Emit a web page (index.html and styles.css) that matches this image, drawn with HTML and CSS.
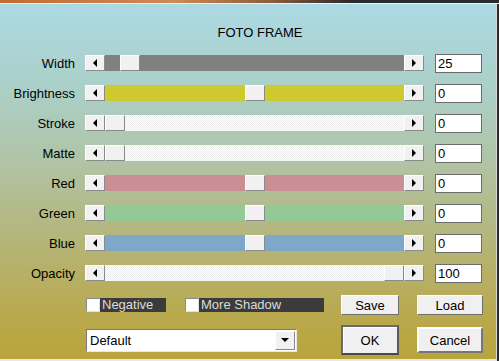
FILE: index.html
```html
<!DOCTYPE html>
<html lang="en">
<head>
  <meta charset="UTF-8">
  <title>Foto Frame</title>
  <link rel="stylesheet" href="styles.css">
</head>
<body>
  <div class="topstrip"></div>
  <div class="dialog">
    <div class="title">FOTO FRAME</div>

    <div class="rows">
      <div class="row">
        <span class="name">Width</span>
        <div class="scroll">
          <span class="arrow"><i class="tri left"></i></span>
          <div class="track gray"><span class="thumb" style="margin-left:15px"></span></div>
          <span class="arrow"><i class="tri right"></i></span>
        </div>
        <input class="num" type="text" value="25">
      </div>
      <div class="row">
        <span class="name">Brightness</span>
        <div class="scroll">
          <span class="arrow"><i class="tri left"></i></span>
          <div class="track yellow"><span class="thumb" style="margin-left:140px"></span></div>
          <span class="arrow"><i class="tri right"></i></span>
        </div>
        <input class="num" type="text" value="0">
      </div>
      <div class="row">
        <span class="name">Stroke</span>
        <div class="scroll">
          <span class="arrow"><i class="tri left"></i></span>
          <div class="track white"><span class="thumb" style="margin-left:0px"></span></div>
          <span class="arrow"><i class="tri right"></i></span>
        </div>
        <input class="num" type="text" value="0">
      </div>
      <div class="row">
        <span class="name">Matte</span>
        <div class="scroll">
          <span class="arrow"><i class="tri left"></i></span>
          <div class="track white"><span class="thumb" style="margin-left:0px"></span></div>
          <span class="arrow"><i class="tri right"></i></span>
        </div>
        <input class="num" type="text" value="0">
      </div>
      <div class="row">
        <span class="name">Red</span>
        <div class="scroll">
          <span class="arrow"><i class="tri left"></i></span>
          <div class="track red"><span class="thumb" style="margin-left:140px"></span></div>
          <span class="arrow"><i class="tri right"></i></span>
        </div>
        <input class="num" type="text" value="0">
      </div>
      <div class="row">
        <span class="name">Green</span>
        <div class="scroll">
          <span class="arrow"><i class="tri left"></i></span>
          <div class="track green"><span class="thumb" style="margin-left:140px"></span></div>
          <span class="arrow"><i class="tri right"></i></span>
        </div>
        <input class="num" type="text" value="0">
      </div>
      <div class="row">
        <span class="name">Blue</span>
        <div class="scroll">
          <span class="arrow"><i class="tri left"></i></span>
          <div class="track blue"><span class="thumb" style="margin-left:140px"></span></div>
          <span class="arrow"><i class="tri right"></i></span>
        </div>
        <input class="num" type="text" value="0">
      </div>
      <div class="row">
        <span class="name">Opacity</span>
        <div class="scroll">
          <span class="arrow"><i class="tri left"></i></span>
          <div class="track white"><span class="thumb" style="margin-left:279px"></span></div>
          <span class="arrow"><i class="tri right"></i></span>
        </div>
        <input class="num" type="text" value="100">
      </div>
    </div>

    <div class="bottom">
      <div class="opts">
        <label class="check"><span class="box"></span><span class="cap cap-neg">Negative</span></label>
        <label class="check"><span class="box"></span><span class="cap cap-shadow">More Shadow</span></label>
      </div>
      <button class="btn small">Save</button>
      <button class="btn small">Load</button>

      <div class="select">
        <span class="select-text">Default</span>
        <span class="drop"><i class="tri down"></i></span>
      </div>
      <button class="btn ok">OK</button>
      <button class="btn cancel">Cancel</button>
    </div>
  </div>
</body>
</html>
```

FILE: styles.css
```css
body {
  margin: 0;
  background-color: #2b2b2b;
  font-family: "Liberation Sans", Arial, sans-serif;
  font-size: 13px;
  color: #000;
  width: 499px;
  height: 361px;
  overflow: hidden;
}
.topstrip {
  height: 3px;
  background: linear-gradient(to right, #c46a35, #d08a55 35%, #8a5a3a 55%, #2b2b2b 70%);
  border-bottom: 1px solid #f2f2f2;
}
.dialog {
  width: 496px;
  height: 355px;
  border-right: 1px solid #d6d6d6;
  border-bottom: 2px solid #e8e8e8;
  background: linear-gradient(#abd9e4, #abcfc6 25%, #b0c3a4 45%, #b4b67c 65%, #b9a84a 90%, #b9a43c);
}
.title {
  padding-top: 22px;
  height: 14px;
  line-height: 14px;
  font-size: 13px;
  text-align: center;
  padding-left: 24px;
}
.rows {
  margin-top: 8px;
}
.row {
  display: flex;
  align-items: center;
  height: 30px;
}
.name {
  width: 75px;
  text-align: right;
  margin-right: 10px;
}
.scroll {
  display: flex;
  width: 339px;
  height: 16px;
  margin-right: 11px;
}
.arrow,
.thumb,
.drop {
  box-sizing: border-box;
  display: flex;
  align-items: center;
  justify-content: center;
  background-color: #f1f1f1;
  border: 1px solid;
  border-color: #ffffff #8a8a8a #8a8a8a #ffffff;
}
.arrow {
  width: 20px;
  height: 16px;
}
.thumb {
  display: block;
  width: 20px;
  height: 16px;
}
.track {
  flex: 1;
  display: flex;
}
.gray { background-color: #808080; }
.yellow { background-color: #cdc92f; }
.red { background-color: #c98f94; }
.green { background-color: #94c895; }
.blue { background-color: #7fa7c9; }
.white {
  background: repeating-conic-gradient(#ffffff 0 25%, #ececec 0 50%) 0 0 / 2px 2px;
}
.tri {
  width: 0;
  height: 0;
  border: 4px solid transparent;
}
.tri.left {
  border-right: 4px solid #000;
  border-left-width: 0;
}
.tri.right {
  border-left: 4px solid #000;
  border-right-width: 0;
}
.tri.down {
  border-top: 4px solid #000;
  border-bottom-width: 0;
}
.num {
  box-sizing: border-box;
  width: 47px;
  height: 19px;
  padding: 0 2px;
  border: 1px solid #6c6c6c;
  background-color: #fff;
  font-family: "Liberation Sans", Arial, sans-serif;
  font-size: 13px;
}
.bottom {
  display: grid;
  grid-template-columns: 237px 58px 66px;
  grid-template-rows: 22px 30px;
  column-gap: 18px;
  row-gap: 9px;
  align-items: center;
  padding: 6px 0 0 86px;
}
.opts {
  display: flex;
  gap: 19px;
}
.check {
  display: flex;
  height: 14px;
}
.box {
  box-sizing: border-box;
  width: 14px;
  height: 14px;
  background-color: #fff;
  border: 1px solid;
  border-color: #8a8a8a #e0e0e0 #e0e0e0 #8a8a8a;
}
.cap {
  background-color: #3b3b3b;
  color: #dcdcdc;
  line-height: 14px;
  padding-left: 2px;
}
.cap-neg { width: 64px; }
.cap-shadow { width: 123px; }
.btn {
  box-sizing: border-box;
  background-color: #f0f0f0;
  border: 1px solid;
  border-color: #ffffff #6f6f6f #6f6f6f #ffffff;
  font-family: "Liberation Sans", Arial, sans-serif;
  font-size: 13px;
  padding: 0;
}
.small { height: 20px; }
.ok {
  height: 30px;
  border: 2px solid;
  border-color: #6a6a6a #5a5a5a #4a4a4a #6a6a6a;
  box-shadow: inset 1px 1px #fff;
}
.cancel {
  height: 26px;
  border-width: 2px;
  border-color: #ffffff #777777 #777777 #ffffff;
}
.select {
  box-sizing: border-box;
  display: flex;
  align-items: center;
  justify-content: space-between;
  width: 211px;
  height: 23px;
  padding: 0 1px 0 3px;
  background-color: #fff;
  border: 1px solid;
  border-color: #7a7a7a #e8e8e8 #e8e8e8 #7a7a7a;
}
.drop {
  width: 20px;
  height: 19px;
}
```
